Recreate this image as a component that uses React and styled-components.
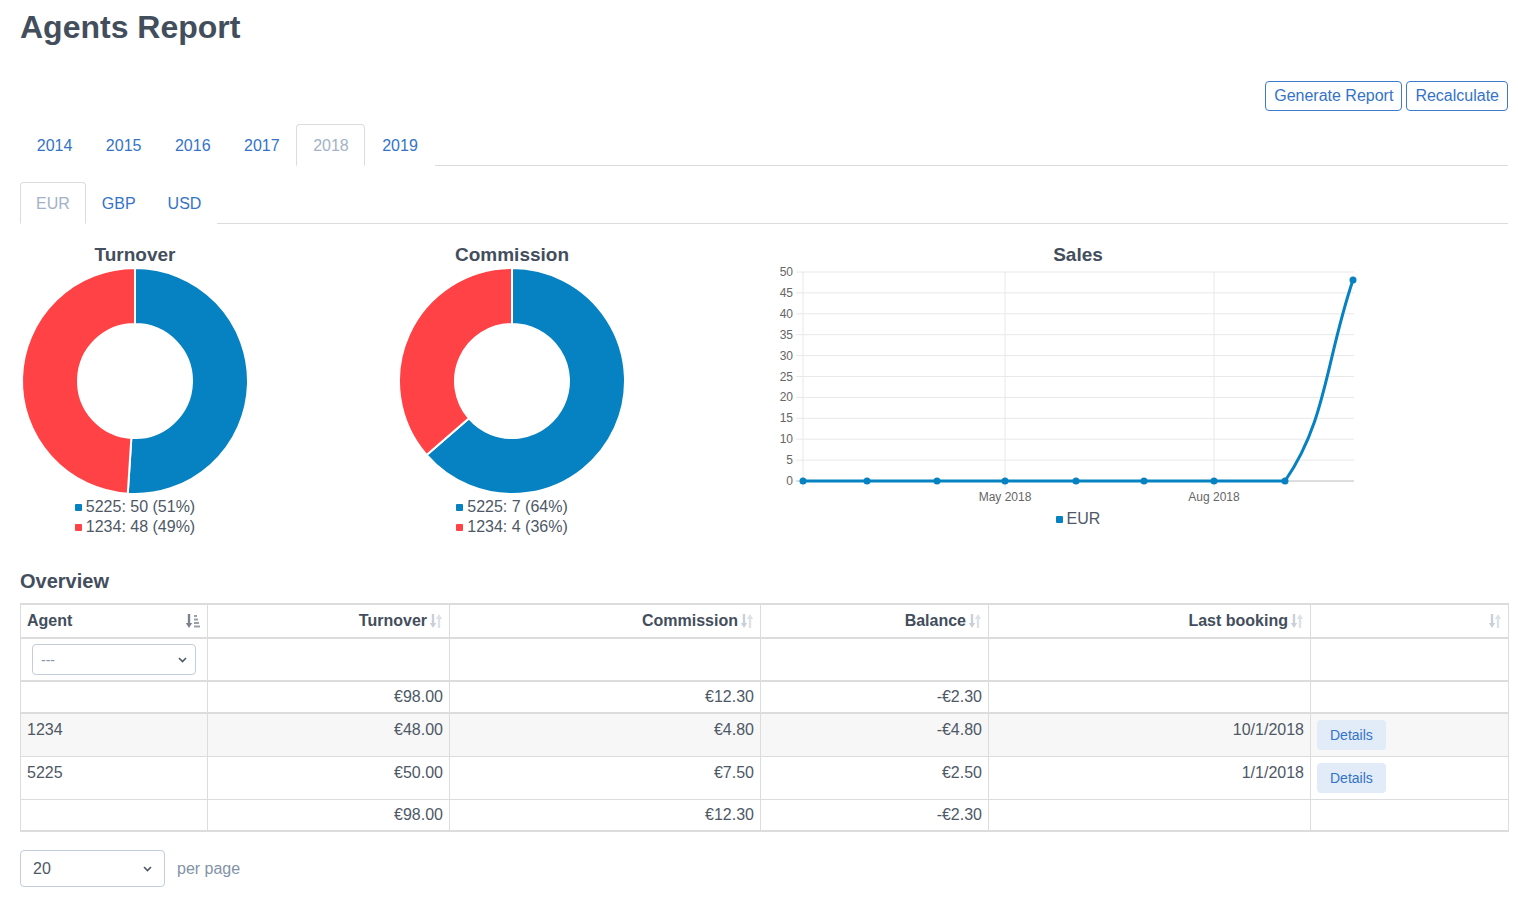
import React from "react";
import styled, { createGlobalStyle } from "styled-components";

const BLUE = "#0681c1";
const RED = "#fe4245";
const LINK = "#3473c7";
const HEAD = "#434e5d";
const TEXT = "#4e5866";
const LINE = "#dcdcdc";

const GlobalStyle = createGlobalStyle`
  body {
    margin: 0;
    background: #fff;
    font-family: "Liberation Sans", Arial, sans-serif;
    color: ${TEXT};
  }
`;

const Page = styled.div`
  padding: 9px 10px 20px 20px;
`;

const Title = styled.h1`
  margin: 0;
  font-size: 32px;
  line-height: 36px;
  font-weight: bold;
  color: ${HEAD};
`;

const Toolbar = styled.div`
  display: flex;
  justify-content: flex-end;
  gap: 4px;
  margin-top: 36px;
`;

const OutlineButton = styled.button`
  font-family: inherit;
  font-size: 16px;
  line-height: 20px;
  padding: 4px 8px;
  color: ${LINK};
  background: #fff;
  border: 1px solid #3d7bcc;
  border-radius: 4px;
`;

const TabBar = styled.div`
  display: flex;
  border-bottom: 1px solid ${LINE};
  margin-top: ${(p) => p.$top}px;
`;

const Tab = styled.div`
  padding: 11px ${(p) => p.$px}px 9px;
  font-size: 16px;
  line-height: 20px;
  margin-bottom: -1px;
  border: 1px solid ${(p) => (p.$active ? LINE : "transparent")};
  border-bottom-color: ${(p) => (p.$active ? "#fff" : "transparent")};
  border-radius: 4px 4px 0 0;
  background: #fff;
  color: ${(p) => (p.$active ? "#a3b2c6" : LINK)};
`;

const ChartsRow = styled.div`
  display: grid;
  grid-template-columns: 377px 373px 616px;
  margin-top: 20px;
`;

const ChartCol = styled.div`
  width: ${(p) => p.$w}px;
  display: flex;
  flex-direction: column;
  align-items: center;
`;

const ChartTitle = styled.div`
  font-size: 19px;
  line-height: 22px;
  font-weight: bold;
  color: ${HEAD};
  text-align: center;
`;

const Legend = styled.div`
  display: flex;
  flex-direction: column;
  align-items: center;
  margin-top: ${(p) => p.$top || 0}px;
  font-size: 16px;
  line-height: 20px;
  color: ${TEXT};
`;

const LegendItem = styled.div`
  display: flex;
  align-items: center;
`;

const Swatch = styled.span`
  display: inline-block;
  width: 7px;
  height: 7px;
  border-radius: 1px;
  margin-right: 4px;
  background: ${(p) => p.$color};
`;

const SectionTitle = styled.h2`
  margin: 32px 0 10px;
  font-size: 20px;
  line-height: 24px;
  font-weight: bold;
  color: ${HEAD};
`;

const Table = styled.table`
  width: 100%;
  table-layout: fixed;
  border-collapse: collapse;
  font-size: 16px;
  line-height: 20px;
`;

const Th = styled.th`
  box-sizing: border-box;
  width: ${(p) => p.$w}px;
  padding: 6px;
  font-weight: bold;
  color: ${HEAD};
  border: 1px solid ${LINE};
  border-top: 2px solid ${LINE};
  border-bottom: 2px solid ${LINE};
`;

const HeadInner = styled.div`
  display: flex;
  align-items: center;
  justify-content: ${(p) => (p.$spread ? "space-between" : "flex-end")};
  gap: 2px;
`;

const Tr = styled.tr`
  background: ${(p) => (p.$striped ? "#f7f7f7" : "#fff")};
  td {
    border-bottom: ${(p) => (p.$thick ? 2 : 1)}px solid ${LINE};
  }
`;

const Td = styled.td`
  padding: ${(p) => (p.$tight ? "5px 6px" : "6px")};
  vertical-align: top;
  text-align: ${(p) => p.$align || "left"};
  border-left: 1px solid ${LINE};
  border-right: 1px solid ${LINE};
  color: ${TEXT};
`;

const SelectBox = styled.div`
  display: flex;
  align-items: center;
  justify-content: space-between;
  box-sizing: border-box;
  width: ${(p) => p.$w}px;
  height: ${(p) => p.$h}px;
  margin-left: ${(p) => p.$ml || 0}px;
  padding: 0 ${(p) => p.$px}px;
  border: 1px solid #c2ccda;
  border-radius: 4px;
  background: #fff;
  font-size: ${(p) => p.$fs}px;
  color: ${(p) => (p.$muted ? "#8796a8" : TEXT)};
`;

const DetailsButton = styled.button`
  font-family: inherit;
  font-size: 14px;
  line-height: 18px;
  padding: 6px 13px;
  border: none;
  border-radius: 4px;
  background: #e2ecf8;
  color: ${LINK};
`;

const Pager = styled.div`
  display: flex;
  align-items: center;
  gap: 12px;
  margin-top: 18px;
`;

const PerPage = styled.span`
  font-size: 16px;
  color: #8393a7;
`;

const Chevron = () => (
  <svg width="9" height="6" viewBox="0 0 9 6">
    <path d="M1 1 L4.5 4.5 L8 1" fill="none" stroke="#4e5866" strokeWidth="1.6" />
  </svg>
);

const SortIcon = () => (
  <svg width="14" height="18" viewBox="0 0 14 18">
    <path d="M4 2 V13" stroke="#c9d0d8" strokeWidth="2.4" />
    <path d="M0.8 11 H7.2 L4 16 Z" fill="#c9d0d8" />
    <path d="M10 5 V16" stroke="#dde2e7" strokeWidth="2.4" />
    <path d="M6.8 7 H13.2 L10 2 Z" fill="#dde2e7" />
  </svg>
);

const SortedIcon = () => (
  <svg width="16" height="18" viewBox="0 0 16 18">
    <path d="M4 2 V13" stroke="#7c838c" strokeWidth="2.4" />
    <path d="M0.8 11 H7.2 L4 16 Z" fill="#7c838c" />
    <rect x="9" y="3" width="3" height="2" fill="#9aa0a8" />
    <rect x="9" y="6.5" width="4" height="2" fill="#9aa0a8" />
    <rect x="9" y="10" width="5" height="2" fill="#9aa0a8" />
    <rect x="9" y="13.5" width="6" height="2" fill="#9aa0a8" />
  </svg>
);

const arcPath = (cx, cy, R, r, a0, a1) => {
  const pt = (rad, a) => [cx + rad * Math.sin(a), cy - rad * Math.cos(a)];
  const large = a1 - a0 > Math.PI ? 1 : 0;
  const [x0, y0] = pt(R, a0);
  const [x1, y1] = pt(R, a1);
  const [x2, y2] = pt(r, a1);
  const [x3, y3] = pt(r, a0);
  return `M${x0} ${y0} A${R} ${R} 0 ${large} 1 ${x1} ${y1} L${x2} ${y2} A${r} ${r} 0 ${large} 0 ${x3} ${y3} Z`;
};

const Donut = ({ values }) => {
  const total = values.reduce((s, v) => s + v.value, 0);
  let start = 0;
  return (
    <svg width="230" height="230" viewBox="0 0 230 230">
      {values.map((v) => {
        const end = start + (v.value / total) * Math.PI * 2;
        const d = arcPath(115, 115, 113, 57, start, end);
        start = end;
        return <path key={v.label} d={d} fill={v.color} stroke="#fff" strokeWidth="2" />;
      })}
    </svg>
  );
};

const DonutChart = ({ title, values }) => {
  const total = values.reduce((s, v) => s + v.value, 0);
  return (
    <ChartCol $w={230}>
      <ChartTitle>{title}</ChartTitle>
      <Donut values={values} />
      <Legend $top={1}>
        {values.map((v) => (
          <LegendItem key={v.label}>
            <Swatch $color={v.color} />
            {v.label}: {v.value} ({Math.round((v.value / total) * 100)}%)
          </LegendItem>
        ))}
      </Legend>
    </ChartCol>
  );
};

const xs = [33, 97, 167, 235, 306, 374, 444, 515, 583];
const yTop = 6;
const yZero = 215;
const step = (yZero - yTop) / 10;

const SalesChart = () => (
  <ChartCol $w={616}>
    <ChartTitle>Sales</ChartTitle>
    <svg width="616" height="239" viewBox="0 0 616 239">
      {Array.from({ length: 11 }, (_, i) => {
        const y = yTop + i * step;
        const val = 50 - i * 5;
        return (
          <g key={i}>
            <line
              x1="26"
              x2="584"
              y1={y}
              y2={y}
              stroke={val === 0 ? "#bcbcbc" : "#e8e8e8"}
              strokeWidth="1"
            />
            <text x="23" y={y + 4} textAnchor="end" fontSize="12" fill="#666" fontFamily="Liberation Sans, Arial, sans-serif">
              {val}
            </text>
          </g>
        );
      })}
      {[33, 235, 444].map((x) => (
        <line key={x} x1={x} x2={x} y1={yTop} y2={yZero + 7} stroke="#e8e8e8" strokeWidth="1" />
      ))}
      <text x="235" y="235" textAnchor="middle" fontSize="12" fill="#666" fontFamily="Liberation Sans, Arial, sans-serif">
        May 2018
      </text>
      <text x="444" y="235" textAnchor="middle" fontSize="12" fill="#666" fontFamily="Liberation Sans, Arial, sans-serif">
        Aug 2018
      </text>
      <path
        d={`M33 ${yZero} L515 ${yZero} C556.7 154.7 555.8 94 583 14`}
        fill="none"
        stroke={BLUE}
        strokeWidth="3"
      />
      {xs.map((x, i) => (
        <circle key={x} cx={x} cy={i === xs.length - 1 ? 14 : yZero} r="3.5" fill={BLUE} />
      ))}
    </svg>
    <Legend $top={4}>
      <LegendItem>
        <Swatch $color={BLUE} />
        EUR
      </LegendItem>
    </Legend>
  </ChartCol>
);

const columns = [
  { key: "agent", label: "Agent", w: 187 },
  { key: "turnover", label: "Turnover", w: 242 },
  { key: "commission", label: "Commission", w: 311 },
  { key: "balance", label: "Balance", w: 228 },
  { key: "last", label: "Last booking", w: 322 },
  { key: "actions", label: "", w: 198 },
];

const rows = [
  { agent: "1234", turnover: "€48.00", commission: "€4.80", balance: "-€4.80", last: "10/1/2018" },
  { agent: "5225", turnover: "€50.00", commission: "€7.50", balance: "€2.50", last: "1/1/2018" },
];

const TotalsRow = ({ thick }) => (
  <Tr $thick={thick}>
    <Td $tight />
    <Td $tight $align="right">€98.00</Td>
    <Td $tight $align="right">€12.30</Td>
    <Td $tight $align="right">-€2.30</Td>
    <Td $tight />
    <Td $tight />
  </Tr>
);

const App = () => (
  <Page>
    <GlobalStyle />
    <Title>Agents Report</Title>
    <Toolbar>
      <OutlineButton>Generate Report</OutlineButton>
      <OutlineButton>Recalculate</OutlineButton>
    </Toolbar>
    <TabBar $top={13}>
      {["2014", "2015", "2016", "2017", "2018", "2019"].map((y) => (
        <Tab key={y} $px={15.75} $active={y === "2018"}>{y}</Tab>
      ))}
    </TabBar>
    <TabBar $top={16}>
      {["EUR", "GBP", "USD"].map((c) => (
        <Tab key={c} $px={15} $active={c === "EUR"}>{c}</Tab>
      ))}
    </TabBar>

    <ChartsRow>
      <DonutChart
        title="Turnover"
        values={[
          { label: "5225", value: 50, color: BLUE },
          { label: "1234", value: 48, color: RED },
        ]}
      />
      <DonutChart
        title="Commission"
        values={[
          { label: "5225", value: 7, color: BLUE },
          { label: "1234", value: 4, color: RED },
        ]}
      />
      <SalesChart />
    </ChartsRow>

    <SectionTitle>Overview</SectionTitle>
    <Table>
      <thead>
        <tr>
          {columns.map((c) => (
            <Th key={c.key} $w={c.w}>
              <HeadInner $spread={c.key === "agent"}>
                {c.label && <span>{c.label}</span>}
                {c.key === "agent" ? <SortedIcon /> : <SortIcon />}
              </HeadInner>
            </Th>
          ))}
        </tr>
      </thead>
      <tbody>
        <Tr $thick>
          <Td $tight>
            <SelectBox $w={164} $h={31} $ml={5} $px={8} $fs={14} $muted>
              <span>---</span>
              <Chevron />
            </SelectBox>
          </Td>
          <Td $tight />
          <Td $tight />
          <Td $tight />
          <Td $tight />
          <Td $tight />
        </Tr>
        <TotalsRow thick />
        {rows.map((r, i) => (
          <Tr key={r.agent} $striped={i % 2 === 0}>
            <Td>{r.agent}</Td>
            <Td $align="right">{r.turnover}</Td>
            <Td $align="right">{r.commission}</Td>
            <Td $align="right">{r.balance}</Td>
            <Td $align="right">{r.last}</Td>
            <Td>
              <DetailsButton>Details</DetailsButton>
            </Td>
          </Tr>
        ))}
        <TotalsRow thick />
      </tbody>
    </Table>

    <Pager>
      <SelectBox $w={145} $h={37} $px={12} $fs={16}>
        <span>20</span>
        <Chevron />
      </SelectBox>
      <PerPage>per page</PerPage>
    </Pager>
  </Page>
);

export default App;
